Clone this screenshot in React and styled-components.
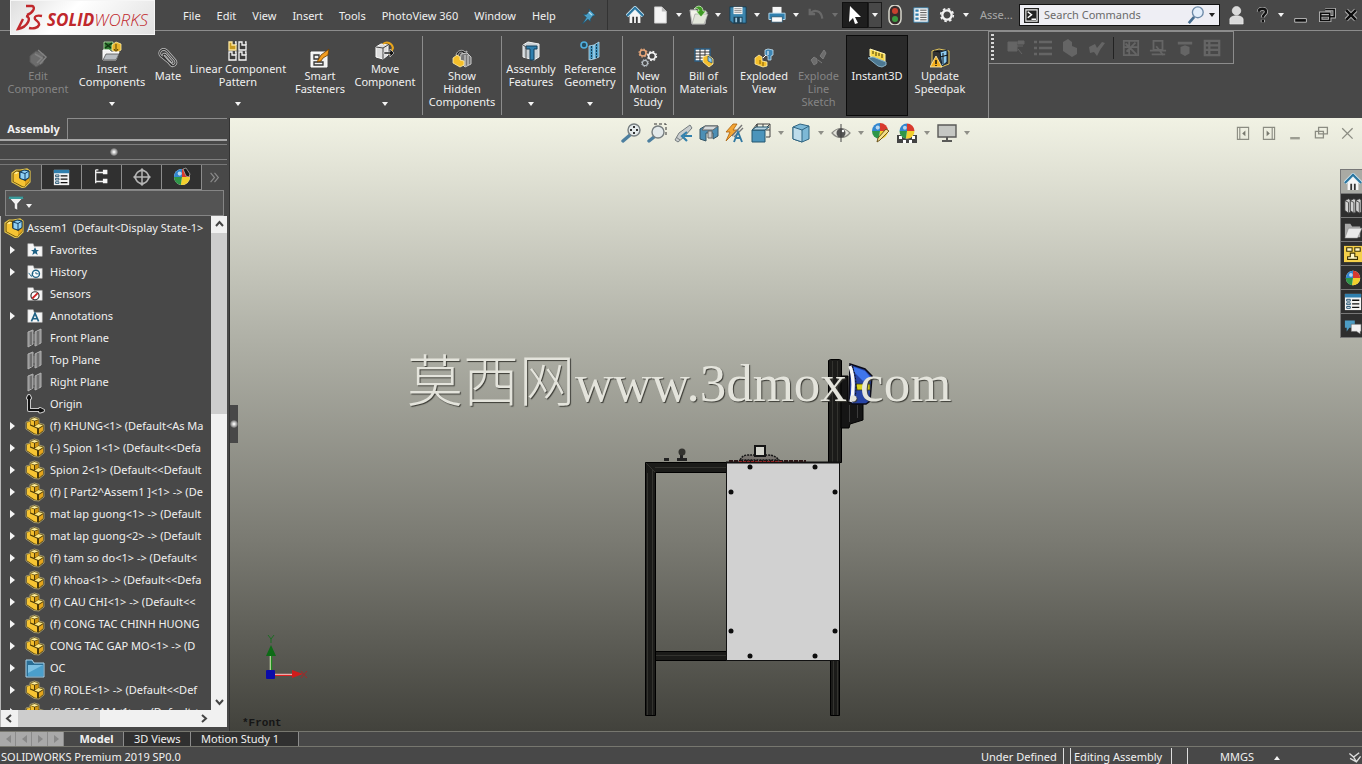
import React from "react";
import styled, { createGlobalStyle, css } from "styled-components";

const c = {
  bg: "#484848",
  dark: "#2a2a2a",
  line: "#8c8c8c",
  text: "#f0f0f0",
  off: "#858585",
};

const Global = createGlobalStyle`
  *, *::before, *::after { box-sizing: border-box; }
  html, body { margin: 0; height: 100%; }
  body { background: ${c.bg}; color: ${c.text}; font: 11px/16px "Noto Sans", "Open Sans", sans-serif; overflow: hidden; }
  button, input { font: inherit; color: inherit; }
  button { background: none; border: 0; padding: 0; cursor: default; }
`;

const Shell = styled.div`
  display: grid;
  grid-template-rows: 31px 87px minmax(0, 1fr) 16px 17px;
  height: 100vh;
  min-width: 1280px;
`;

/* ---------- title bar ---------- */
const TitleBar = styled.header`
  display: flex;
  align-items: center;
  border-bottom: 1px solid ${c.line};
  position: relative;
`;
const Logo = styled.a`
  position: absolute;
  left: 10px;
  top: 0;
  z-index: 2;
  display: flex;
  align-items: center;
  width: 145px;
  height: 35px;
  padding-left: 5px;
  background: linear-gradient(135deg, #dedede, #ffffff 40%, #e2e2e2);
  border: 1px solid #f6f6f6;
  color: #c0282c;
  text-decoration: none;
  font: italic 700 17px/20px "Open Sans", sans-serif;
`;
const LogoText = styled.span`
  padding: 4px 0 0 3px;
`;
const Thin = styled.span`
  font-weight: 300;
`;
const Menu = styled.nav`
  display: flex;
  align-items: center;
  gap: 16px;
  width: 608px;
  height: 30px;
  padding: 2px 0 0 183px;
  border-right: 1px solid #333;
  white-space: nowrap;
`;
const Pin = styled.button`
  display: grid;
  margin-left: 8px;
`;
const Tools = styled.div`
  display: flex;
  align-items: center;
  padding-left: ${(p) => p.$pad || 0}px;
  margin-left: ${(p) => (p.$end ? "auto" : 0)};
`;
const Cell = styled.button`
  display: grid;
  place-items: center;
  flex: none;
  width: ${(p) => p.$w || 26}px;
  height: ${(p) => p.$h || 26}px;
  ${(p) => p.$on && css`background: #1e1e1e; outline: 1px solid #111; outline-offset: -1px;`}
  ${(p) => p.$framed && css`border: 1px solid #1c1c1c;`}
`;
const CaretBox = styled(Cell).attrs((p) => ({ $w: p.$w || 14 }))``;
const DocName = styled.span`
  width: 46px;
  padding-left: 7px;
  color: #a8a8a8;
`;
const Search = styled.label`
  display: flex;
  align-items: center;
  width: 201px;
  height: 22px;
  padding-left: 4px;
  background: #eeeef4;
  border: 1px solid #111;
`;
const SearchInput = styled.input`
  flex: 1;
  min-width: 0;
  margin-left: 3px;
  padding: 0 2px;
  border: 0;
  outline: 0;
  background: transparent;
  color: #333;
  &::placeholder { color: #6a6a6a; opacity: 1; }
`;

/* ---------- ribbon ---------- */
const Ribbon = styled.div`
  display: flex;
  align-items: flex-start;
`;
const Group = styled.div`
  display: flex;
  height: ${(p) => (p.$last ? 87 : 79)}px;
  margin-top: ${(p) => (p.$last ? 0 : 5)}px;
  padding-right: ${(p) => p.$end || 0}px;
  border-right: 1px solid ${c.line};
`;
const Command = styled.button`
  display: flex;
  flex-direction: column;
  align-items: center;
  width: ${(p) => p.$w}px;
  height: 79px;
  padding-top: ${(p) => (p.$menu ? 5 : 12)}px;
  margin-top: ${(p) => (p.$last ? 5 : 0)}px;
  margin-right: ${(p) => p.$after || 0}px;
  line-height: 13px;
  color: ${(p) => (p.$off ? c.off : c.text)};
  white-space: pre;
  ${(p) => p.$on && css`background: ${c.dark}; outline: 1px solid #0c0c0c;`}
`;
const CommandText = styled.span`
  padding-top: 1px;
`;
const CommandCaret = styled.span`
  display: grid;
  margin-top: 13px;
`;
const FloatBar = styled.div`
  display: flex;
  align-items: center;
  width: 245px;
  height: 33px;
  border: 1px solid ${c.line};
  border-left: 0;
`;
const Grip = styled.span`
  width: 3px;
  height: 27px;
  margin: 0 8px 0 2px;
  background: repeating-linear-gradient(#d8d8d8 0 2px, transparent 2px 4px);
`;
const Rule = styled.span`
  flex: none;
  width: 1px;
  height: ${(p) => p.$h || 22}px;
  margin: 0 ${(p) => p.$m || 3}px;
  background: ${(p) => p.$c || "#222"};
`;

/* ---------- body ---------- */
const Body = styled.main`
  display: grid;
  grid-template-columns: 230px minmax(0, 1fr);
  min-height: 0;
`;
const Side = styled.aside`
  display: flex;
  flex-direction: column;
  min-height: 0;
  padding-right: 2px;
  border-right: 1px solid #333;
`;
const RibbonTabs = styled.div`
  display: flex;
  height: 23px;
  border-bottom: 2px solid #a8a8a8;
`;
const RibbonTab = styled.button`
  width: 68px;
  font-weight: 700;
  border-right: 1px solid ${c.line};
`;
const RibbonTabFill = styled.span`
  flex: 1;
  border-top: 1px solid ${c.line};
`;
const Splitter = styled.div`
  display: grid;
  place-items: center;
  height: 16px;
  margin: 3px 0 4px;
  border: solid #808080;
  border-width: 1px 0;
`;
const Dot = styled.span`
  width: 8px;
  height: 8px;
  border-radius: 50%;
  background: radial-gradient(#f4f4f4 10%, #999 50%, #4c4c4c 75%);
`;
const PaneTabs = styled.div`
  display: flex;
  height: 26px;
  border-top: 1px solid #777;
`;
const PaneTab = styled.button`
  display: grid;
  place-items: center;
  flex: none;
  width: ${(p) => p.$w || 40}px;
  border-right: ${(p) => (p.$plain ? 0 : 1)}px solid ${c.line};
  border-bottom: ${(p) => (p.$on || p.$plain ? 0 : 1)}px solid ${c.line};
  background: ${(p) => (p.$on || p.$plain ? c.bg : "#303030")};
`;
const Filter = styled.div`
  display: flex;
  align-items: center;
  height: 26px;
  margin: 0 3px 0 5px;
  background: #545454;
  border: 1px solid #858585;
`;
const FilterCaret = styled.span`
  display: grid;
  padding-top: 6px;
`;
const TreeFrame = styled.div`
  display: grid;
  grid-template-columns: minmax(0, 1fr) 16px;
  grid-template-rows: minmax(0, 1fr) 17px;
  flex: 1;
  min-height: 0;
  margin-bottom: 4px;
  border-left: 1px solid #b5b5b5;
`;
const Tree = styled.ul`
  margin: 0;
  padding: 1px 0 0;
  list-style: none;
  overflow: hidden;
`;
const Node = styled.li`
  display: flex;
  align-items: center;
  height: 22px;
  padding-left: ${(p) => (p.$root ? 3 : 0)}px;
  white-space: pre;
  > svg { flex: none; }
`;
const Toggle = styled.button`
  display: grid;
  place-items: center;
  flex: none;
  width: ${(p) => p.$w || 22}px;
  height: 20px;
`;
const Label = styled.span`
  margin-left: 3px;
`;
const VBar = styled.div`
  display: flex;
  flex-direction: column;
  background: #f1f1f1;
`;
const HBar = styled.div`
  display: flex;
  grid-column: 1 / 3;
  background: #f1f1f1;
`;
const BarEnd = styled.button`
  display: grid;
  place-items: center;
  width: 17px;
  height: 17px;
`;
const VThumb = styled.span`
  height: 181px;
  background: #cdcdcd;
`;
const HThumb = styled.span`
  width: 82px;
  background: #cdcdcd;
`;
const Fill = styled.span`
  flex: 1;
`;

/* ---------- graphics area ---------- */
const Scene = styled.section`
  position: relative;
  overflow: hidden;
  background: linear-gradient(#f1f2e4, #b1b2a8 35%, #7a7a72 69%, #42423c);
`;
const SceneHead = styled.div`
  display: grid;
  grid-template-columns: 1fr auto 1fr;
  align-items: center;
  height: 30px;
`;
const DocButtons = styled.div`
  display: flex;
  justify-content: flex-end;
  padding-right: 2px;
`;
const Drawing = styled.svg`
  position: absolute;
  left: calc(50% - 156px);
  top: 237px;
`;
const Triad = styled.svg`
  position: absolute;
  left: 30px;
  bottom: 49px;
`;
const ViewName = styled.span`
  position: absolute;
  left: 12px;
  bottom: 0;
  color: #161616;
  font: 700 11px/16px "Liberation Mono", monospace;
`;
const Mark = styled.div`
  position: absolute;
  left: calc(50% - 389px);
  top: 225px;
  display: flex;
  align-items: baseline;
  color: #e4e4dc;
  font: 53px/68px "Liberation Serif", "Noto Sans CJK SC", serif;
  text-shadow: 1px 1px 1px #3c3c36;
`;
const MarkHan = styled.span`
  font: 300 56px/68px "Noto Sans CJK SC", sans-serif;
`;
const Handle = styled.button`
  position: absolute;
  left: -1px;
  top: 287px;
  display: grid;
  place-items: center;
  width: 9px;
  height: 38px;
  background: #484848;
`;
const TaskPane = styled.div`
  position: absolute;
  right: 0;
  top: 51px;
  width: 22px;
  border: solid #777;
  border-width: 1px 0 0 1px;
`;
const TaskTab = styled.button`
  display: grid;
  place-items: center;
  width: 100%;
  height: 24px;
  padding-left: 3px;
  overflow: hidden;
  background: ${(p) => (p.$on ? "#a9aaa4" : "#2e2e2e")};
  border-bottom: 1px solid #777;
`;

/* ---------- footer ---------- */
const DocTabs = styled.div`
  display: flex;
  border-top: 1px solid #77776f;
  border-bottom: 1px solid #77776f;
  line-height: 14px;
`;
const Step = styled.button`
  display: grid;
  place-items: center;
  width: 16px;
  background: #a9a9a9;
  border-right: 1px solid #8b8b8b;
`;
const DocTab = styled.button`
  width: ${(p) => p.$w}px;
  background: ${(p) => (p.$on ? c.bg : "#303030")};
  border-right: 1px solid ${c.line};
  font-weight: ${(p) => (p.$on ? 700 : 400)};
  text-align: ${(p) => (p.$on ? "center" : "left")};
  padding-left: ${(p) => (p.$on ? 6 : 10)}px;
  white-space: nowrap;
`;
const Status = styled.footer`
  display: flex;
  align-items: center;
  padding: 2px 0 0 1px;
  line-height: 15px;
  white-space: nowrap;
  overflow: hidden;
`;
const StatusPart = styled.span`
  flex: none;
  width: ${(p) => p.$w}px;
  padding-left: ${(p) => p.$pad || 0}px;
`;

/* ---------- icons ---------- */
const Svg = ({ s = 20, children }) => (
  <svg width={s} height={s} viewBox="0 0 20 20" aria-hidden="true">{children}</svg>
);
const Caret = ({ fill = "#f4f4f4", dir = "down" }) => {
  const d = { down: "M0 1h6L3 5z", up: "M0 5h6L3 1z", right: "M1 0v8L6 4z", left: "M6 0v8L1 4z" }[dir];
  const side = dir === "right" || dir === "left";
  return <svg width="6" height={side ? 8 : 6} viewBox={side ? "0 0 6 8" : "0 0 6 6"} aria-hidden="true"><path d={d} fill={fill} /></svg>;
};
const Chevron = ({ d }) => (
  <svg width="9" height="9" viewBox="0 0 9 9" aria-hidden="true"><path d={d} fill="none" stroke="#444" strokeWidth="2" /></svg>
);

const Part = ({ s = 20 }) => (
  <Svg s={s}>
    <path d="M1 6l4-1V2.500L9.500 1 14 2.500V7l5 1.500V15l-5 4-5-.500L1 13z" fill="#4e3c08" stroke="#b9ad7a" strokeWidth=".8" />
    <path d="M5.500 3.200L9.500 2l4 1.200-4 1.600z" fill="#ffef9c" />
    <path d="M5.500 3.800l3.500 1.500v4.500l-3.500-1.300z" fill="#f3bf2f" />
    <path d="M10 5.300l3.500-1.300v4L10 9.500z" fill="#cf9412" />
    <path d="M2 6.500l3-.8v3.800l7 3v5.500l-2.500-.500L2 12.500z" fill="#f6c433" />
    <path d="M9.500 10.500l4-2.500L18 9.200 13.500 12z" fill="#ffe980" />
    <path d="M14 12.700l4-2.500v4.300L14 17.800z" fill="#e3a41c" />
  </Svg>
);
const Asm = ({ s = 20 }) => (
  <Svg s={s}>
    <path d="M1 5l4-3h4l7-1 3 2v11l-5 5-3 .500L1 14z" fill="#5b4506" stroke="#e6c74c" strokeWidth="1.200" />
    <path d="M2.500 5.500L5.500 3.500 8 4v6l6 3v5l-2 .500-9.500-5z" fill="#f6c433" />
    <path d="M3 5.500l2.500-1.800L8 4 5.500 6z" fill="#ffef9c" />
    <path d="M14 13.500l4-3.500v3.500L14 17.500z" fill="#e3a41c" />
    <path d="M9 4l4-2 5 1v6.500L14 12 9 10.500z" fill="#8fd0f4" stroke="#123f66" />
    <path d="M9 4l5 1.500L18 3M14 5.500V12" stroke="#123f66" fill="none" />
  </Svg>
);
const Gear = ({ x = 10, y = 10, r = 5, col = "#f2f2f2" }) => (
  <g transform={`translate(${x} ${y})`}>
    <circle r={r} fill="none" stroke={col} strokeWidth={r * 0.5} />
    <circle r={r * 1.35} fill="none" stroke={col} strokeWidth={r * 0.35} strokeDasharray={`${r * 0.53} ${r * 0.53}`} />
  </g>
);
const folderTab = <path d="M2 3h6l1 3h9v11H2z" fill="#f5f5f5" stroke="#bbb" strokeWidth=".6" />;
const Ball = ({ x = 10, y = 10, r = 7 }) => (
  <g transform={`translate(${x} ${y}) scale(${r / 7})`}>
    <circle r="7" fill="#eee" />
    <path d="M0 0L-7 0A7 7 0 0 1 0-7z" fill="#3186cf" />
    <path d="M0 0V-7A7 7 0 0 1 7 0z" fill="#d83a2e" />
    <path d="M0 0H7A7 7 0 0 1-1 7z" fill="#f2cf2c" />
    <path d="M0 0L-1 7A7 7 0 0 1-7 0z" fill="#2f9648" />
    <circle cx="-2" cy="-3" r="1.800" fill="#fff" opacity=".65" />
  </g>
);
const Lens = ({ x, y, r = 5 }) => (
  <>
    <path d={`M2 18L${x - 4} ${y + 5}`} stroke="#4d7f9f" strokeWidth="3.400" strokeLinecap="round" />
    <circle cx={x} cy={y} r={r} fill="#e3e9ea" stroke="#777e80" strokeWidth="1.400" />
  </>
);

const I = {
  editComp: <g fill="#6c6c6c" stroke="#5a5a5a"><path d="M2 8l6-5 8 3-1 9-7 4-6-5z" /><path d="M7 6l7 4-5 5M10 2l8 7-6 7" fill="none" stroke="#838383" strokeWidth="1.500" /></g>,
  insert: <><path d="M2 1h9v8H2z" fill="#2e7d32" stroke="#9fc894" /><path d="M3 7l7-5M3 2l6 5" stroke="#123512" strokeWidth="1.500" /><path d="M10 4l4-3 5 2v6l-5 3-4-3z" fill="#e9b32a" stroke="#fff0a0" strokeWidth=".8" /><path d="M14 3v7M12 8l2 3 2-3" stroke="#554000" fill="none" /><path d="M1 9h6l2 2h8l-3 8H1z" fill="#f3f3f3" stroke="#fff" /><path d="M4 13h13l-3 6H1z" fill="#b8bdc2" stroke="#444" strokeWidth=".7" /></>,
  mate: <g fill="none" strokeLinecap="round"><path d="M14 17L3 8C-1 4 5-1 9 3l8 9c3 4-2 7-4 5L6 9c-2-2 0-4 2-2l6 7" stroke="#c4c4c4" strokeWidth="2.600" /><path d="M14 17L3 8C-1 4 5-1 9 3l8 9c3 4-2 7-4 5L6 9c-2-2 0-4 2-2l6 7" stroke="#333" strokeWidth="1.100" /></g>,
  linear: <g strokeWidth="1.300" stroke="#f4f4f4">{[[1, 1], [11, 1], [1, 11], [11, 11]].map(([x, y], i) => <path key={i} transform={`translate(${x} ${y})`} d="M0 0h3v3h4v5H0z" fill={i ? "#3c3c3c" : "#c79a20"} stroke={i ? "#f4f4f4" : "#ffe9a0"} />)}<path d="M7 1h1v3M17 1h1v3M7 11h1v3M17 11h1v3" fill="none" /></g>,
  smart: <><path d="M1 4h16v15H1z" fill="#f0f0f0" stroke="#fff" /><path d="M4 7h5v4H4zM4 14h9v3H4z" fill="none" stroke="#333" strokeWidth="1.300" /><path d="M19 1l-8 6-4 7 4-1 2-3 5-3z" fill="#f39c1f" stroke="#6a3c00" strokeWidth=".8" /></>,
  move: <><path d="M1 6l5-3 7 1v10l-5 4-7-2z" fill="#ddd" stroke="#fff" /><path d="M1 6l7 1 5-3M8 7v11" stroke="#444" fill="none" /><path d="M8 3c4-3 9-1 10 4l-3 7" fill="none" stroke="#e8a51c" strokeWidth="2" /><path d="M9 11h6V8l4 4-4 4v-3H9z" fill="#111" stroke="#eee" strokeWidth=".6" /></>,
  hidden: <><path d="M4 7c1-5 7-6 9-3l2-1-1 5-4-1 1-2c-2-2-5 0-5 3z" fill="#222" stroke="#ddd" strokeWidth=".7" /><path d="M9 6l6-1 4 4v7l-6 3-5-5z" fill="#777" stroke="#ccc" /><path d="M13 7v11M16 7v10" stroke="#ddd" /><path d="M1 10l4-3 3 2v3l4 1v4l-4 2-7-4z" fill="#f5bf2a" stroke="#fff0b0" strokeWidth=".8" /></>,
  asmFeat: <><path d="M2 4l5-3 11 2v13l-5 3-11-3z" fill="#c9d1d6" stroke="#f2f2f2" /><path d="M5 5h11v3h-3v11H9V8H5z" fill="#2f7fae" stroke="#123f5a" /><path d="M2 4l3 2v12" stroke="#555" fill="none" /></>,
  refGeo: <><circle cx="4" cy="4" r="3" fill="#244c60" stroke="#4fb0df" strokeWidth="1.600" /><path d="M9 5l5-1v14l-5 1zM14 4l5-3v15l-5 2z" fill="#4d9cc4" stroke="#b9def0" strokeWidth=".8" /><path d="M11.500 5v13M16.500 3v14" stroke="#153f55" strokeDasharray="2 1" /></>,
  motion: <><Gear x={5} y={5} r={3} col="#e8a678" /><Gear x={14} y={8} r={3.4} /><Gear x={7} y={15} r={2.6} col="#b8c0c6" /></>,
  bom: <><path d="M1 1h15v12H1z" fill="#fafafa" stroke="#2a5f86" strokeWidth="1.400" /><path d="M1 4h15M1 7h15M1 10h15M6 1v12M11 1v12" stroke="#333" /><path d="M9 9l5-2 5 4v5l-4 3-6-5z" fill="#f3bd2c" stroke="#fff1b0" strokeWidth=".8" /><path d="M14 8l4 3v4l-4-2z" fill="#8ccbee" stroke="#1d4a6a" strokeWidth=".7" /></>,
  explode: <><path d="M1 10l4-3 3 2v4l5 1v4l-4 1-8-3z" fill="#f5bf2a" stroke="#fff0b0" strokeWidth=".8" /><path d="M6 12v4M9 14v4" stroke="#7d5a06" /><path d="M11 2l3-1 5 1v5l-2 1v4h-3V8l-3-1z" fill="#3d86b5" stroke="#c6e2f2" strokeWidth=".8" /><path d="M14 3v4M9 10l3-3" stroke="#fff" /></>,
  explodeOff: <g fill="#6d6d6d" stroke="#7b7b7b"><path d="M2 12l3-3 3 2v4l-3 2zM11 8l4-6 2 3-3 6zM9 12l4 3" /></g>,
  instant: <><path d="M3 1l15 5v8L3 8z" fill="#f8d94c" stroke="#fff5b5" /><path d="M6 3v3M9 4v4M12 5v3M15 6v4" stroke="#443600" /><path d="M1 10l5-1 13 5v3l-4 2-4-1z" fill="#4c7892" stroke="#89b0c4" /></>,
  update: <><path d="M2 3l7-2 10 2v13l-8 3-9-3z" fill="#333" stroke="#e4c65c" /><path d="M10 4l7-2v12l-5 4z" fill="#8dcaf0" stroke="#123" /><path d="M10 4L4 3M13 5v11M10 9l8-2" stroke="#111" /><path d="M6 8l6 11H0z" fill="#f5b01e" stroke="#fff2b8" strokeWidth=".8" /><path d="M6 12v4M6 17v1" stroke="#111" strokeWidth="1.500" /></>,
  home: <><path d="M4 10v9h12v-9l-6-6z" fill="#f5f5f5" /><path d="M1 11l9-9 9 9" fill="none" stroke="#d9edf7" strokeWidth="4" /><path d="M1 11l9-9 9 9" fill="none" stroke="#2a759f" strokeWidth="2.400" /><path d="M7 12h2v7H7zM11 12h2v7h-2z" fill="#333" /></>,
  page: <><path d="M4 1h8l5 5v13H4z" fill="#f4f4f4" stroke="#ccc" /><path d="M12 1v5h5z" fill="#bbb" /></>,
  open: <><path d="M1 5h6l2 2h9l-2 12H3z" fill="#f2f2ea" stroke="#bbb" /><path d="M6 9h13l-4 10H3z" fill="#e2e6da" stroke="#999" strokeWidth=".6" /><path d="M5 4c4-5 9-3 9 2h3l-5 6-5-6h3c0-2-2-3-5-2z" fill="#3f9a25" stroke="#e6ffd8" strokeWidth=".7" /></>,
  save: <><path d="M1 1h18v18H4l-3-3z" fill="#3b85ad" stroke="#163d54" /><path d="M5 1h10v8H5z" fill="#f3f3f3" /><path d="M6 3h8M6 5h8M6 7h8" stroke="#8a8a8a" /><path d="M5 12h10v7H5z" fill="#1c4157" /><path d="M7 13h2v5H7zM12 13h2v5h-2z" fill="#9cc6dc" /></>,
  print: <><path d="M5 1h10v7H5z" fill="#f6f6f6" /><path d="M1 8h18v7H1z" fill="#2f7fae" stroke="#b7dcf0" /><path d="M4 12h12v6H4z" fill="#fafafa" stroke="#1d4a66" strokeWidth=".8" /></>,
  undo: <path d="M3 3v6h6M3 9c5-6 13-4 14 5" fill="none" stroke="#696969" strokeWidth="2.500" />,
  cursor: <path d="M5 1l11 11h-6l3 6-3 1-2-6-4 4z" fill="#fff" />,
  traffic: <><rect x="4" y="0" width="12" height="20" rx="6" fill="#392c2c" stroke="#d6d6cc" strokeWidth="1.500" /><circle cx="10" cy="6" r="3" fill="#c8402e" /><circle cx="10" cy="14" r="3" fill="#3a9a3f" /></>,
  list: <><path d="M1 1h18v18H1z" fill="#f3f3f3" stroke="#2f7fae" /><path d="M3 3h4v3H3zM3 8h4v3H3zM3 13h4v3H3z" fill="#2f7fae" /><path d="M9 4h8M9 7h8M9 10h8M9 13h8M9 16h8" stroke="#333" /></>,
  table: <><path d="M1 1h18v18H1z" fill="#f3f3f3" /><path d="M1 1h18v4H1z" fill="#2f7fae" /><path d="M3 7h4v2H3zM3 11h4v2H3zM3 15h4v2H3z" fill="none" stroke="#174a6a" /><path d="M9 8h8M9 12h8M9 16h8" stroke="#111" strokeWidth="1.500" /></>,
  gear: <Gear r={5.2} />,
  user: <g fill="#d9d9d9" stroke="#f4f4f4" strokeWidth=".6"><circle cx="10" cy="5" r="4.500" /><path d="M3 19v-5c0-5 14-5 14 0v5z" /></g>,
  help: <g fill="none"><path d="M6 6c0-5 9-5 9 0 0 3-4 3-4 7M11 16v3" stroke="#bbb" strokeWidth="5" /><path d="M6 6c0-5 9-5 9 0 0 3-4 3-4 7M11 16v3" stroke="#111" strokeWidth="3" /></g>,
  min: <path d="M3 14h13v4H3z" fill="#0d0d0d" stroke="#c8c8c8" strokeWidth="1" />,
  restore: <g fill="none"><path d="M8 4h10v8h-5M3 8h10v8H3zM3 11h10" stroke="#b5b5b5" strokeWidth="3.800" /><path d="M8 4h10v8h-5M3 8h10v8H3zM3 11h10" stroke="#0c0c0c" strokeWidth="1.700" /></g>,
  close: <g fill="none"><path d="M4 4l12 12M16 4L4 16" stroke="#b5b5b5" strokeWidth="5.400" /><path d="M4 4l12 12M16 4L4 16" stroke="#0c0c0c" strokeWidth="3" /></g>,
  pin: <><path d="M11 1l8 8-3 1-3 4v3l-3-3-7 6 5-8-4-4h4l4-4z" fill="#4b9fc6" stroke="#1e5069" strokeWidth=".8" /><path d="M11 5l4 4" stroke="#b6def0" strokeWidth="1.500" /></>,
  mag: <><path d="M2 19l6-7" stroke="#456c8f" strokeWidth="3" /><circle cx="12" cy="7" r="6" fill="#e3eefb" stroke="#6d8aa8" strokeWidth="1.500" /></>,
  prompt: <><path d="M0 0h20v20H0z" fill="#222" /><path d="M2.500 2.500h15v15h-15z" fill="none" stroke="#eee" strokeWidth="1.500" /><path d="M5 5l5 4-5 4M10 15h6" fill="none" stroke="#fff" strokeWidth="2" /></>,
  tree: <><path d="M3 2v15M3 5h9M3 15h9M3 2h3" stroke="#eee" strokeWidth="1.500" fill="none" /><path d="M11 2h5v5h-5zM11 12h5v5h-5z" fill="#f5f5f5" /></>,
  target: <g fill="none" stroke="#b5b5b5" strokeWidth="1.500"><path d="M10 1l3 3-3 0-3 0zM10 19l3-3H7zM1 10l3 3V7zM19 10l-3 3V7z" fill="#b5b5b5" stroke="none" /><circle cx="10" cy="10" r="6.500" /><path d="M10 2v16M2 10h16" /></g>,
  ball: <><Ball r={8} /><path d="M11 2l3-1 4 6-1 3-3-1z" fill="#1c1c1c" stroke="#ccc" strokeWidth=".6" /></>,
  more: <path d="M4 3l6 7-6 7M10 3l6 7-6 7" fill="none" stroke="#8a8a8a" strokeWidth="1.800" />,
  funnel: <><path d="M1 3h18l-7 8v8l-4-2v-6z" fill="#f2f2f2" stroke="#222" strokeWidth=".6" /><path d="M1 2h18v3H1z" fill="#3b9c9c" /></>,
  star: <>{folderTab}<path d="M10 7l1.500 3h3l-2.500 2 1 3.500-3-2-3 2 1-3.500-2.500-2h3z" fill="#1f6285" /></>,
  history: <>{folderTab}<circle cx="11" cy="12" r="4" fill="#fff" stroke="#1f6285" strokeWidth="1.500" /><path d="M11 10v2h3M3 11l3 4 2-4" stroke="#1f6285" fill="none" /></>,
  sensors: <>{folderTab}<circle cx="10" cy="12" r="4.500" fill="#fff" stroke="#333" strokeWidth="1.300" /><path d="M7 15l6-6" stroke="#c22" strokeWidth="2" /></>,
  notes: <>{folderTab}<path d="M6 16l4-9 4 9M8 13h4" fill="none" stroke="#1f6285" strokeWidth="1.800" /></>,
  plane: <><path d="M3 4l5-2v14l-5 3zM10 4l6-3v14l-6 3z" fill="#8e8e8e" stroke="#b2b2b2" /><path d="M6 4v13M8 5h2M8 14h2M13 3v14" stroke="#666" strokeWidth="1.500" /></>,
  origin: <g fill="none" strokeLinecap="round" strokeLinejoin="round"><path d="M4 3v13h13M3 4l1-2 1 2M15 15l3 1.500-3 1" stroke="#c8c8c8" strokeWidth="4" /><path d="M4 3v13h13M3 4l1-2 1 2M15 15l3 1.500-3 1" stroke="#111" strokeWidth="2" /></g>,
  folder: <><path d="M1 2h6l2 3h10v14H1z" fill="#2a6e95" stroke="#a9d3ea" /><path d="M3 7h15v11H3z" fill="#4b9fcb" /><path d="M3 7h15l-15 8z" fill="#7cc0e2" /></>,
  fit: <><Lens x={13} y={7} r={6} /><path d="M13 3v8M9 7h8" stroke="#333" strokeDasharray="2 4" strokeWidth="2" /></>,
  area: <><path d="M7 1h12v12" fill="none" stroke="#333" strokeDasharray="3 2" /><Lens x={11} y={9} r={6} /></>,
  prev: <><path d="M17 2L6 10l-4 7 3 2 6-5 8-9z" fill="#c9cdce" stroke="#757d80" /><path d="M3 14l4 3" stroke="#757d80" /><path d="M19 13h-8m3-4l-5 4 5 5" stroke="#3280ad" strokeWidth="2.200" fill="none" /></>,
  section: <><path d="M1 6l5-3h13v10l-5 3v-6H7v8l-6-2z" fill="#4c8fb5" stroke="#365564" /><path d="M6 3l13 0-5 4H3z" fill="#d5dadd" stroke="#666" /><path d="M9 8h4v7H9z" fill="#c4cacd" stroke="#666" /></>,
  dyn: <><path d="M8 1L1 9h4l-4 9 11-11H8l4-6z" fill="#f3a533" stroke="#ab610b" strokeWidth=".8" /><path d="M17 2L7 13M18 5l-9 9" stroke="#777" strokeWidth="1.400" /><path d="M9 19l4-10 4 10M11 15h4" fill="none" stroke="#3178a1" strokeWidth="1.900" /></>,
  orient: <><path d="M6 5V1h13v13h-4M6 1v4M19 1l-4 4M12 1v4M6 1L2 6M19 7h-4" fill="none" stroke="#444" /><path d="M1 7h13v12H1z" fill="#4b94bb" stroke="#24566f" /><path d="M1 7l4-3h13l-4 3z" fill="#b9d5e3" stroke="#24566f" /></>,
  cube: <><path d="M2 4l7-3 9 2v13l-7 3-9-3z" fill="#7db8d6" stroke="#2f6481" /><path d="M2 4l9 3v12l-9-3z" fill="#bddceb" stroke="#2f6481" /><path d="M11 7l7-4" stroke="#2f6481" /></>,
  eye: <><path d="M1 10c5-6 13-6 18 0-5 6-13 6-18 0z" fill="#e2e2da" stroke="#8a8a84" strokeWidth="1.200" /><circle cx="10" cy="10" r="4.500" fill="#555" /><path d="M10 1v18" stroke="#444" /><circle cx="12" cy="8" r="1.200" fill="#fff" /></>,
  appear: <><Ball x={9} y={8} r={8} /><path d="M18 8L9 17l-3 2 1-4 8-9z" fill="#f4df8a" stroke="#6d541c" /></>,
  sceneIc: <><path d="M0 12h20v8H0z" fill="#444" /><path d="M2 13h3v3H2zM15 13h3v3h-3zM6 17h3v3H6zM12 17h3v3h-3z" fill="#fff" /><Ball x={10} y={8} r={7.5} /></>,
  monitor: <><path d="M1 2h18v12H1z" fill="#c5c7c3" stroke="#5a5a58" strokeWidth="1.400" /><path d="M10 14v4M5 18h10" stroke="#5a5a58" strokeWidth="2" /></>,
  books: <g fill="#d2d2d2" stroke="#3a3a3a" strokeWidth=".9"><path d="M1 4l4-2 2 1v14l-2 1-4-3z" /><path d="M7 4l4-2 2 1v14l-2 1-4-3z" /><path d="M13 4l4-2 2 1v14l-2 1-4-3z" /><path d="M1 4l4 2v12M7 4l4 2v12M13 4l4 2v12" fill="none" /></g>,
  openFolder: <><path d="M1 3h6l2 3h9v12H1z" fill="#aaa" /><path d="M5 8h15l-5 11H1z" fill="#e9e9e9" stroke="#888" strokeWidth=".6" /></>,
  palette: <><path d="M0 1h20v18H0z" fill="#f5d04a" /><path d="M3 3h6v4H3zM12 3h6v4h-6zM7 9h5v4h3v3H4v-3h3z" fill="#fff7c8" stroke="#3a3000" strokeWidth="1.200" /></>,
  chat: <><path d="M1 4h11v8H6l-3 4v-4H1z" fill="#4d9cc4" /><path d="M8 8h11v8h-1v3l-4-3H8z" fill="#f2f2f2" stroke="#555" strokeWidth=".6" /></>,
  dockL: <g fill="none" stroke="#8b8c82" strokeWidth="1.400"><path d="M3 3h14v15H3zM6 3v15" /><path d="M13 7v7l-4-3.500z" fill="#77786e" stroke="none" /></g>,
  dockR: <g fill="none" stroke="#8b8c82" strokeWidth="1.400"><path d="M3 3h14v15H3zM14 3v15" /><path d="M7 7v7l4-3.500z" fill="#77786e" stroke="none" /></g>,
  minD: <path d="M4 15h12v3H4z" fill="#9c9d92" />,
  restoreD: <path d="M7 3h11v8H7zM3 8h10v8H3z" fill="none" stroke="#8b8c82" strokeWidth="1.600" />,
  closeD: <path d="M4 4l13 13M17 4L4 17" fill="none" stroke="#8b8c82" strokeWidth="1.600" />,
};
const g = "#656565";
const ghosts = [
  <path d="M2 4h9v9H2zM12 3h6v3h-6zM11 8h6M12 11l4 5" fill={g} stroke={g} strokeLinejoin="round" />,
  <path d="M1 4h3M6 4h13M1 10h3M6 10h13M1 16h3M6 16h13" stroke={g} strokeWidth="2.500" />,
  <path d="M3 4l5-3 4 3v4l5 2v6l-5 3-9-6z" fill={g} />,
  <path d="M2 9l6-3 2 4 5-6 3 1-5 7-3 6-3-4-4 1z" fill={g} />,
  <path d="M2 2h16v16H2zM4 5l12 12M5 14L15 4M8 3v14M3 9h14" fill="none" stroke={g} strokeWidth="2" />,
  <path d="M5 2h10v10H5zM1 13h18M3 17h15M8 8l8 10" fill="none" stroke={g} strokeWidth="2" />,
  <path d="M2 3h16v3H2zM5 9l5-2 5 2v7l-5 3-5-3z" fill={g} />,
  <path d="M2 2h16v16H2zM2 7h16M2 12h16M7 2v16" fill="none" stroke={g} strokeWidth="2.500" />,
];

const Btn = ({ name, icon, s = 18, ...rest }) => (
  <Cell aria-label={name} {...rest}><Svg s={s}>{I[icon]}</Svg></Cell>
);
const Drop = ({ name, fill, ...rest }) => (
  <CaretBox aria-label={`${name} options`} {...rest}><Caret fill={fill} /></CaretBox>
);

const commandGroups = [
  {
    end: 4,
    items: [
      { t: "Edit\nComponent", i: "editComp", w: 76, off: true },
      { t: "Insert\nComponents", i: "insert", w: 72, menu: true },
      { t: "Mate", i: "mate", w: 40 },
      { t: "Linear Component\nPattern", i: "linear", w: 100, menu: true },
      { t: "Smart\nFasteners", i: "smart", w: 64 },
      { t: "Move\nComponent", i: "move", w: 66, menu: true },
    ],
  },
  { items: [{ t: "Show\nHidden\nComponents", i: "hidden", w: 78 }] },
  {
    end: 2,
    items: [
      { t: "Assembly\nFeatures", i: "asmFeat", w: 58, menu: true },
      { t: "Reference\nGeometry", i: "refGeo", w: 60, menu: true },
    ],
  },
  { items: [{ t: "New\nMotion\nStudy", i: "motion", w: 50 }] },
  { items: [{ t: "Bill of\nMaterials", i: "bom", w: 59 }] },
  {
    end: 15,
    last: true,
    items: [
      { t: "Exploded\nView", i: "explode", w: 60 },
      { t: "Explode\nLine\nSketch", i: "explodeOff", w: 49, after: 4, off: true },
      { t: "Instant3D", i: "instant", w: 60, on: true },
      { t: "Update\nSpeedpak", i: "update", w: 66 },
    ],
  },
];

const nodes = [
  ["Favorites", "star", true], ["History", "history", true], ["Sensors", "sensors", false], ["Annotations", "notes", true],
  ["Front Plane", "plane", false], ["Top Plane", "plane", false], ["Right Plane", "plane", false], ["Origin", "origin", false],
  ["(f) KHUNG<1> (Default<As Ma", "part", true],
  ["(-) Spion 1<1> (Default<<Defa", "part", true],
  ["Spion 2<1> (Default<<Default", "part", true],
  ["(f) [ Part2^Assem1 ]<1> -> (De", "part", true],
  ["mat lap guong<1> -> (Default", "part", true],
  ["mat lap guong<2> -> (Default", "part", true],
  ["(f) tam so do<1> -> (Default<", "part", true],
  ["(f) khoa<1> -> (Default<<Defa", "part", true],
  ["(f) CAU CHI<1> -> (Default<<", "part", true],
  ["(f) CONG TAC CHINH HUONG", "part", true],
  ["CONG TAC GAP MO<1> -> (D", "part", true],
  ["OC", "folder", true],
  ["(f) ROLE<1> -> (Default<<Def", "part", true],
  ["(f) GIAC CAM<1> -> (Default<", "part", true],
];

const headsUp = [
  ["Zoom to fit", "fit"], ["Zoom to area", "area"], ["Previous view", "prev"], ["Section view", "section"], ["Dynamic annotation", "dyn"],
  ["View orientation", "orient", true], ["Display style", "cube", true], ["Hide items", "eye", true], ["Edit appearance", "appear"],
  ["Apply scene", "sceneIc", true], ["View settings", "monitor", true],
];

/* side view of the cabinet, its frame and the signal lamp */
const Cabinet = () => (
  <Drawing width="240" height="368" viewBox="640 355 240 368" role="img" aria-label="Front view of the assembly">
    <g fill="#1b1b19" stroke="#000">
      <path d="M645.500 462.500h194v10h-184v243h-10z" />
      <path d="M655.500 651.500h72v9h-72z" />
      <path d="M830.500 658.500h9v57h-9z" />
      <path d="M828.500 360.500l2-1h9l2 1v102h-13z" />
    </g>
    <path d="M647.500 473v242M652.500 470v245M655 467.500h72M656 655.500h71M833.500 661v54M837.500 661v54M832.500 361v101M837.500 361v101M646 463l9 9" stroke="#33332f" fill="none" />
    <rect x="726.500" y="462.500" width="113" height="198" fill="#d1d1d1" stroke="#111" />
    <path d="M726 462.500h114" stroke="#111" strokeWidth="2" />
    <path d="M729 461h77" stroke="#2a1515" strokeWidth="2" strokeDasharray="4 1" />
    <path d="M739 461.500h44" stroke="#8c2020" strokeDasharray="3 1" />
    <path d="M740 460c3-6 8-5 11-5h16c7 0 9 2 12 5z" fill="#77736e" stroke="#161616" strokeWidth="1.500" strokeDasharray="2 1" />
    <rect x="755" y="446" width="10" height="10" fill="#d4d5cd" stroke="#151515" strokeWidth="2" />
    <path d="M677 461h10v-3h-10zM664 461h5v-3h-5z" fill="#222" />
    <path d="M681.500 458v-6" stroke="#222" strokeWidth="3" />
    <circle cx="682" cy="452" r="3.500" fill="#33332f" />
    {[[750, 467], [815, 467], [731, 492], [835, 492], [731, 631], [835, 631], [750, 656], [815, 656]].map(([x, y]) => (
      <circle key={`${x}-${y}`} cx={x} cy={y} r="2.500" fill="#0e0e0e" />
    ))}
    <path d="M841 376h7v26h15v18l-13 4-1 4h-8z" fill="#151515" stroke="#000" />
    <path d="M849.500 405v17M857.500 405v13" stroke="#3c3c3c" />
    <path d="M850 364l15 5 7 7-2 25-4 3h-14l-3-4z" fill="#2744a6" stroke="#0b0b18" strokeWidth="1.500" />
    <path d="M854 367l11 4 5 6-7 4-9-9z" fill="#3f76ec" />
    <path d="M856 384h14v6h-13z" fill="#d8d21c" stroke="#3b3b0c" strokeWidth=".8" />
    <path d="M850 366c4 11 4 26 1 36" stroke="#f8f8f8" strokeWidth="3.500" fill="none" />
    <path d="M852 366c5 11 5 26 2 36" stroke="#111" strokeWidth="1" fill="none" strokeDasharray="2 1" />
  </Drawing>
);

export default function App() {
  return (
    <>
      <Global />
      <Shell>
        <TitleBar>
          <Logo href="#home" aria-label="SolidWorks">
            <svg width="28" height="28" viewBox="0 0 28 28" fill="none" stroke="#c0282c" strokeWidth="2.400" aria-hidden="true">
              <path d="M10 2h6c4 1 1 7-5 9M10 12c6 1 2 11-8 13l5-10M26 12c-5-1-8 0-7 3 1 2 5 3 4 6-1 3-6 4-10 3" />
            </svg>
            <LogoText>SOLID<Thin>WORKS</Thin></LogoText>
          </Logo>
          <Menu>
            {["File", "Edit", "View", "Insert", "Tools", "PhotoView 360", "Window", "Help"].map((m) => <button key={m}>{m}</button>)}
            <Pin aria-label="Pin menu"><Svg s={16}>{I.pin}</Svg></Pin>
          </Menu>
          <Tools $pad={14}>
            <Btn name="Home" icon="home" $w={25} />
            <Btn name="New" icon="page" $w={25} /><Drop name="New" />
            <Btn name="Open" icon="open" $w={25} s={20} /><Drop name="Open" />
            <Btn name="Save" icon="save" $w={25} /><Drop name="Save" />
            <Btn name="Print" icon="print" $w={25} /><Drop name="Print" />
            <Btn name="Undo" icon="undo" $w={25} /><Drop name="Undo" fill="#707070" />
            <Btn name="Select" icon="cursor" $on s={20} /><Drop name="Select" $framed />
            <Btn name="Rebuild" icon="traffic" s={20} />
            <Btn name="File properties" icon="list" s={16} />
            <Btn name="Options" icon="gear" $w={25} /><Drop name="Options" />
            <DocName>Asse...</DocName>
          </Tools>
          <Search>
            <Svg s={15}>{I.prompt}</Svg>
            <SearchInput type="text" placeholder="Search Commands" aria-label="Search commands" />
            <Svg s={18}>{I.mag}</Svg>
            <Drop name="Search" fill="#222" />
          </Search>
          <Tools $end>
            <Btn name="Account" icon="user" s={19} />
            <Btn name="Help" icon="help" s={16} $w={25} /><Drop name="Help" />
            <Btn name="Minimize" icon="min" s={18} />
            <Btn name="Restore" icon="restore" s={18} />
            <Btn name="Close" icon="close" s={16} $w={22} />
          </Tools>
        </TitleBar>

        <Ribbon>
          {commandGroups.map((group, gi) => (
            <Group key={gi} $last={group.last} $end={group.end}>
              {group.items.map((b) => (
                <Command key={b.t} $w={b.w} $menu={b.menu} $off={b.off} $on={b.on} $after={b.after} $last={group.last}>
                  <Svg s={20}>{I[b.i]}</Svg>
                  <CommandText>{b.t}</CommandText>
                  {b.menu && <CommandCaret><Caret /></CommandCaret>}
                </Command>
              ))}
            </Group>
          ))}
          <FloatBar>
            <Grip />
            {ghosts.slice(0, 4).map((x, i) => <Cell key={i} $w={27} aria-label={`Sensor tool ${i + 1}`}><Svg s={20}>{x}</Svg></Cell>)}
            <Rule />
            {ghosts.slice(4).map((x, i) => <Cell key={i} $w={27} aria-label={`Layout tool ${i + 1}`}><Svg s={18}>{x}</Svg></Cell>)}
          </FloatBar>
        </Ribbon>

        <Body>
          <Side>
            <RibbonTabs><RibbonTab>Assembly</RibbonTab><RibbonTabFill /></RibbonTabs>
            <Splitter><Dot /></Splitter>
            <PaneTabs>
              <PaneTab $w={42} $on aria-label="Feature tree"><Asm s={20} /></PaneTab>
              <PaneTab aria-label="Properties"><Svg s={17}>{I.table}</Svg></PaneTab>
              <PaneTab aria-label="Configurations"><Svg s={18}>{I.tree}</Svg></PaneTab>
              <PaneTab aria-label="Dimensions"><Svg s={20}>{I.target}</Svg></PaneTab>
              <PaneTab aria-label="Display"><Svg s={20}>{I.ball}</Svg></PaneTab>
              <PaneTab $w={25} $plain aria-label="More tabs"><Svg s={13}>{I.more}</Svg></PaneTab>
            </PaneTabs>
            <Filter>
              <Cell $w={20} aria-label="Filter"><Svg s={16}>{I.funnel}</Svg></Cell>
              <FilterCaret><Caret /></FilterCaret>
            </Filter>
            <TreeFrame>
              <Tree>
                <Node $root><Asm s={20} /><Label>{"Assem1  (Default<Display State-1>"}</Label></Node>
                {nodes.map(([t, i, open]) => (
                  <Node key={t + i}>
                    <Toggle aria-label={`Expand ${t}`} disabled={!open}>{open && <Caret dir="right" />}</Toggle>
                    <Toggle as="span" $w={24}>{i === "part" ? <Part s={20} /> : <Svg s={i === "folder" || i === "origin" || i === "plane" ? 20 : 18}>{I[i]}</Svg>}</Toggle>
                    <Label>{t}</Label>
                  </Node>
                ))}
              </Tree>
              <VBar>
                <BarEnd aria-label="Scroll up"><Chevron d="M1 6l3.500-4L8 6" /></BarEnd>
                <VThumb /><Fill />
                <BarEnd aria-label="Scroll down"><Chevron d="M1 3l3.500 4L8 3" /></BarEnd>
              </VBar>
              <HBar>
                <BarEnd aria-label="Scroll left"><Chevron d="M6 1L2 4.500L6 8" /></BarEnd>
                <HThumb /><Fill />
                <BarEnd aria-label="Scroll right"><Chevron d="M3 1l4 3.500L3 8" /></BarEnd>
                <Rule $h={1} $c="transparent" $m={7} />
              </HBar>
            </TreeFrame>
          </Side>

          <Scene>
            <SceneHead>
              <span />
              <Tools>
                {headsUp.map(([n, i, drop]) => (
                  <React.Fragment key={i}>
                    <Btn name={n} icon={i} s={20} />
                    {drop && <Drop name={n} fill="#8f8f88" />}
                  </React.Fragment>
                ))}
              </Tools>
              <DocButtons>
                {[["Dock left", "dockL"], ["Dock right", "dockR"], ["Minimize document", "minD"], ["Restore document", "restoreD"], ["Close document", "closeD"]].map(([n, i]) => (
                  <Btn key={i} name={n} icon={i} s={16} />
                ))}
              </DocButtons>
            </SceneHead>
            <Cabinet />
            <Mark><MarkHan>莫西网</MarkHan>www.3dmox.com</Mark>
            <Triad width="60" height="50" viewBox="0 0 60 50" role="img" aria-label="Axes">
              <path d="M10.500 43V17" stroke="#d9e8b8" strokeWidth="1.500" /><path d="M11.500 40V22" stroke="#1d8a1d" strokeWidth="1.500" />
              <path d="M6 24l5-11 5 11z" fill="#0d6b16" />
              <path d="M14 42.500h20" stroke="#eaa" strokeWidth="1.500" /><path d="M14 43.500h20" stroke="#d22" />
              <path d="M32 38l11 4-11 4z" fill="#cf1c1c" />
              <rect x="6" y="38" width="9" height="9" rx="1" fill="#0b0ba8" />
              <path d="M8 3l3 4 3-4M11 7v4" stroke="#1b6d22" fill="none" /><path d="M41 39l6 7M47 39l-6 7" stroke="#a32727" fill="none" />
            </Triad>
            <ViewName>*Front</ViewName>
            <Handle aria-label="Collapse panel"><Dot /></Handle>
            <TaskPane>
              {[["Resources", "home"], ["Design library", "books"], ["File explorer", "openFolder"], ["View palette", "palette"], ["Appearances", "ball"], ["Custom properties", "table"], ["Forum", "chat"]].map(([n, i], k) => (
                <TaskTab key={n} $on={k === 0} aria-label={n}><Svg s={18}>{i === "ball" ? <Ball r={8} /> : I[i]}</Svg></TaskTab>
              ))}
            </TaskPane>
          </Scene>
        </Body>

        <DocTabs>
          {["left", "left", "right", "right"].map((d, k) => <Step key={k} aria-label={`Tab step ${k + 1}`}><Caret dir={d} fill="#888" /></Step>)}
          <DocTab $w={60} $on>Model</DocTab>
          <DocTab $w={67}>3D Views</DocTab>
          <DocTab $w={108}>Motion Study 1</DocTab>
        </DocTabs>
        <Status>
          <span>SOLIDWORKS Premium 2019 SP0.0</span>
          <Fill />
          <StatusPart $w={79}>Under Defined</StatusPart>
          <Rule $h={17} $c="#ddd" /><Rule $h={17} $c="#ddd" />
          <StatusPart $w={95}>Editing Assembly</StatusPart>
          <Rule $h={17} $c="#ddd" $m={2} /><Rule $h={17} $c="#ddd" $m={13} />
          <StatusPart $w={73} $pad={19}>MMGS</StatusPart>
          <StatusPart $w={74}><Caret dir="up" /></StatusPart>
          <Svg s={14}><path d="M2 5l6 5 8-6M3 12l9 5 6-8M8 10l4 7" fill="none" stroke="#ddd" strokeWidth="2" /></Svg>
        </Status>
      </Shell>
    </>
  );
}
